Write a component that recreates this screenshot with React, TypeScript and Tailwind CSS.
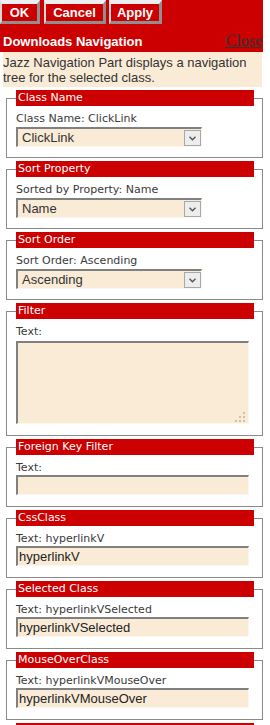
import React from 'react';

const red = 'bg-[#cc0000]';

function TopButton({ label, width }: { label: string; width: string }) {
  return (
    <button
      type="button"
      className={`${width} h-[24px] ${red} border-t-[4px] border-l-[2px] border-r-[3px] border-b-[3px] border-t-[#efefef] border-l-[#d9d9d9] border-r-[#8f8f8f] border-b-[#8f8f8f] text-white font-bold text-[13px] leading-none font-['Liberation_Sans',Arial,sans-serif]`}
    >
      {label}
    </button>
  );
}

function Section({
  title,
  pad = 'pb-[10px]',
  children,
}: {
  title: string;
  pad?: string;
  children: React.ReactNode;
}) {
  return (
    <fieldset className={`ml-[6px] mt-[3px] w-[257px] border border-[#8a8a8a] pl-[9px] ${pad}`}>
      <legend
        className={`${red} w-[238px] h-[16px] px-[2px] text-white text-[11px] leading-[16px] font-['DejaVu_Sans',Verdana,sans-serif]`}
      >
        {title}
      </legend>
      {children}
    </fieldset>
  );
}

function Label({ text }: { text: string }) {
  return (
    <div className="mt-[6px] h-[13px] text-[11px] leading-[13px] text-[#3a3a3a] font-['DejaVu_Sans',Verdana,sans-serif]">
      {text}
    </div>
  );
}

function SelectBox({ value }: { value: string }) {
  return (
    <div className="mt-[2px] w-[186px] h-[20px] flex bg-[#faebd7] border-t-2 border-l-2 border-r border-b border-t-[#808080] border-l-[#808080] border-r-[#fbf6ee] border-b-[#fbf6ee]">
      <div className="flex-1 pl-[4px] text-[13px] leading-[17px] text-[#333] font-['Liberation_Sans',Arial,sans-serif]">
        {value}
      </div>
      <div className="w-[17px] h-[16px] mt-[1px] bg-[#ededed] border border-[#a8a8a8] flex items-center justify-center">
        <svg width="7" height="5" viewBox="0 0 7 5">
          <path d="M0.5 0.8 L3.5 3.8 L6.5 0.8" fill="none" stroke="#555" strokeWidth="1.4" />
        </svg>
      </div>
    </div>
  );
}

function TextBox({ value }: { value: string }) {
  return (
    <div className="mt-[1px] w-[233px] h-[20px] bg-[#faebd7] border-t-2 border-l-2 border-r border-b border-t-[#808080] border-l-[#808080] border-r-[#fbf6ee] border-b-[#fbf6ee] pl-[1px] text-[13px] leading-[17px] text-[#222] font-['Liberation_Sans',Arial,sans-serif]">
      {value}
    </div>
  );
}

const selects = [
  { title: 'Class Name', label: 'Class Name: ClickLink', value: 'ClickLink' },
  { title: 'Sort Property', label: 'Sorted by Property: Name', value: 'Name' },
  { title: 'Sort Order', label: 'Sort Order: Ascending', value: 'Ascending' },
];

const texts = [
  { title: 'Foreign Key Filter', label: 'Text:', value: '' },
  { title: 'CssClass', label: 'Text: hyperlinkV', value: 'hyperlinkV' },
  { title: 'Selected Class', label: 'Text: hyperlinkVSelected', value: 'hyperlinkVSelected' },
  { title: 'MouseOverClass', label: 'Text: hyperlinkVMouseOver', value: 'hyperlinkVMouseOver' },
];

export default function App() {
  return (
    <div className="w-[270px] bg-white pb-[10px]">
      {/* header */}
      <div className={`${red} w-[263px] h-[52px]`}>
        <div className="flex">
          <TopButton label="OK" width="w-[40px]" />
          <div className="w-[4px]" />
          <TopButton label="Cancel" width="w-[62px]" />
          <div className="w-[3px]" />
          <TopButton label="Apply" width="w-[53px]" />
        </div>
        <div className="flex justify-between items-end h-[28px] pl-[3px] pr-[1px] pb-[3px]">
          <span className="text-white font-bold text-[13px] leading-[15px] font-['Liberation_Sans',Arial,sans-serif]">
            Downloads Navigation
          </span>
          <span className="text-[#333] underline text-[16px] leading-[16px] font-['Liberation_Serif','Times_New_Roman',serif]">
            Close
          </span>
        </div>
      </div>

      <div className="ml-[3px] w-[259px] bg-[#faebd7] pt-[3px] pb-[2px] text-[13px] leading-[15px] text-[#333] font-['Liberation_Sans',Arial,sans-serif]">
        Jazz Navigation Part displays a navigation tree for the selected class.
      </div>

      {selects.map((s) => (
        <Section key={s.title} title={s.title}>
          <Label text={s.label} />
          <SelectBox value={s.value} />
        </Section>
      ))}

      <Section title="Filter">
        <Label text="Text:" />
        <div className="relative mt-[3px] w-[233px] h-[83px] bg-[#faebd7] border-t-2 border-l-2 border-r border-b border-t-[#808080] border-l-[#808080] border-r-[#fbf6ee] border-b-[#fbf6ee] mb-[1px]">
          <svg className="absolute right-[2px] bottom-[1px]" width="11" height="11" viewBox="0 0 11 11">
            <rect x="8" y="1" width="2" height="2" fill="#cdbfae" />
            <rect x="4" y="5" width="2" height="2" fill="#cdbfae" />
            <rect x="8" y="5" width="2" height="2" fill="#cdbfae" />
            <rect x="0" y="9" width="2" height="2" fill="#cdbfae" />
            <rect x="4" y="9" width="2" height="2" fill="#cdbfae" />
            <rect x="8" y="9" width="2" height="2" fill="#cdbfae" />
          </svg>
        </div>
      </Section>

      {texts.map((t) => (
        <Section key={t.title} title={t.title} pad="pb-[11px]">
          <Label text={t.label} />
          <TextBox value={t.value} />
        </Section>
      ))}

      {/* next section's header, just peeking in at the bottom edge */}
      <div className={`ml-[16px] mt-[3px] w-[238px] h-[16px] ${red}`} />
    </div>
  );
}
